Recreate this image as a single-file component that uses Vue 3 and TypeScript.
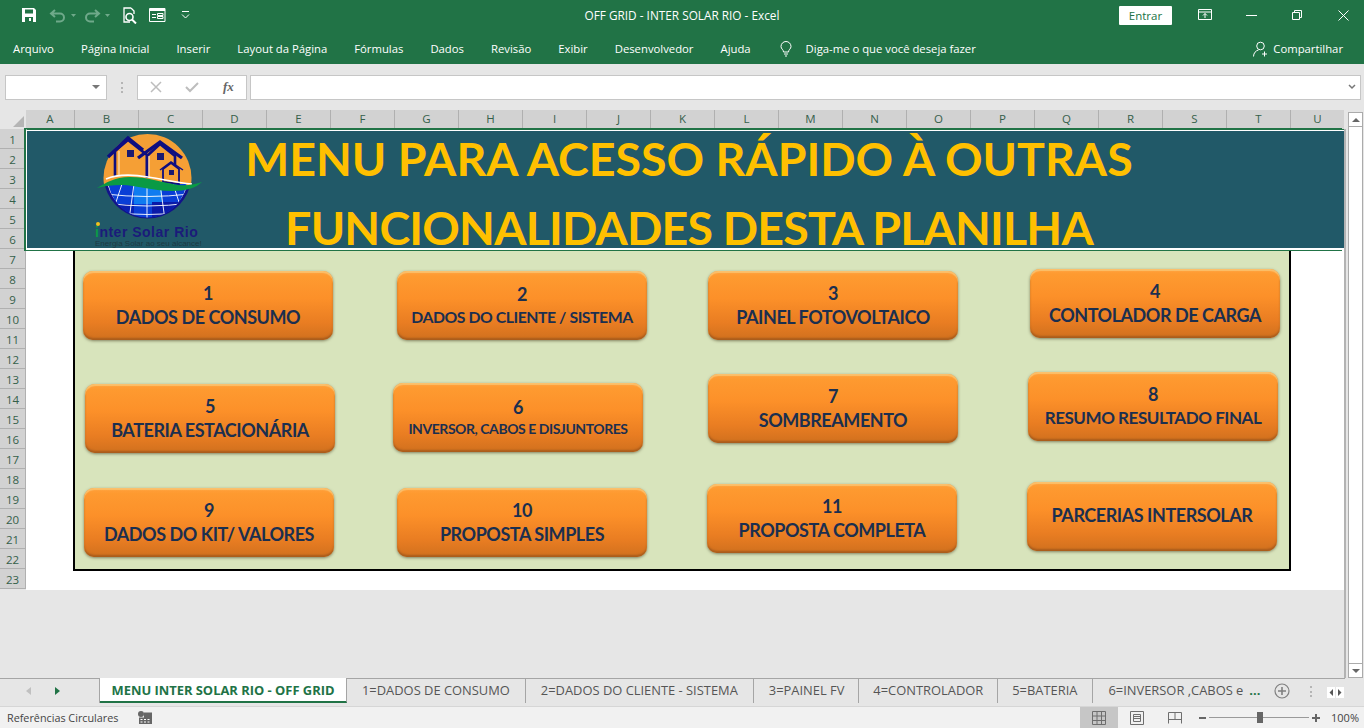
<script setup lang="ts">
const menuTabs = ['Arquivo', 'Página Inicial', 'Inserir', 'Layout da Página', 'Fórmulas', 'Dados', 'Revisão', 'Exibir', 'Desenvolvedor', 'Ajuda']
const columns = 'ABCDEFGHIJKLMNOPQRSTU'.split('')
const rows = Array.from({ length: 23 }, (_, i) => i + 1)
const sheetTabs = ['1=DADOS DE CONSUMO', '2=DADOS DO CLIENTE - SISTEMA', '3=PAINEL FV', '4=CONTROLADOR', '5=BATERIA']

// shapes float over the sheet, so each one keeps its own place (page x/y)
const shapes = [
  { x: 83, y: 271, num: '1', label: 'DADOS DE CONSUMO', size: 18 },
  { x: 397, y: 271, num: '2', label: 'DADOS DO CLIENTE / SISTEMA', size: 15.8 },
  { x: 708, y: 271, num: '3', label: 'PAINEL FOTOVOLTAICO', size: 18 },
  { x: 1030, y: 269, num: '4', label: 'CONTOLADOR DE CARGA', size: 18 },
  { x: 85, y: 384, num: '5', label: 'BATERIA ESTACIONÁRIA', size: 18 },
  { x: 393, y: 383, num: '6', label: 'INVERSOR, CABOS E DISJUNTORES', size: 14 },
  { x: 708, y: 374, num: '7', label: 'SOMBREAMENTO', size: 18 },
  { x: 1028, y: 372, num: '8', label: 'RESUMO RESULTADO FINAL', size: 17 },
  { x: 84, y: 488, num: '9', label: 'DADOS DO KIT/ VALORES', size: 18 },
  { x: 397, y: 488, num: '10', label: 'PROPOSTA SIMPLES', size: 18 },
  { x: 707, y: 484, num: '11', label: 'PROPOSTA COMPLETA', size: 18 },
  { x: 1027, y: 482, num: '', label: 'PARCERIAS INTERSOLAR', size: 18 }
]
</script>

<template>
  <div class="excel">
    <header class="titlebar">
      <div class="quick">
        <svg class="q-save" width="16" height="16" viewBox="0 0 16 16"><path d="M1 1h12l2 2v12H1z" fill="#fff" /><path d="M4 2.500h8v4H4zM4 10h8v5H4z" fill="#217346" /><path d="M8 11h2v3H8z" fill="#fff" /></svg>
        <svg class="q-undo" width="30" height="16" viewBox="0 0 30 16"><path d="M6 3 2 6.500 6 10M2.500 6.500H11a4 4 0 0 1 0 8H7" fill="none" stroke="#6fa98a" stroke-width="2" /><path d="M22 7h5l-2.500 3z" fill="#6fa98a" /></svg>
        <svg class="q-redo" width="30" height="16" viewBox="0 0 30 16"><path d="M10 3l4 3.500L10 10M13.500 6.500H5a4 4 0 0 0 0 8h4" fill="none" stroke="#6fa98a" stroke-width="2" /><path d="M20 7h5l-2.500 3z" fill="#6fa98a" /></svg>
        <svg class="q-print" width="17" height="17" viewBox="0 0 17 17"><path d="M9 1H2v14h6M9 1l3 3v3" fill="none" stroke="#fff" stroke-width="1.300" /><circle cx="7.500" cy="10" r="3.500" fill="none" stroke="#fff" stroke-width="1.600" /><path d="M10 12.500l4 4" stroke="#fff" stroke-width="2" /></svg>
        <svg class="q-form" width="17" height="14" viewBox="0 0 17 14"><path d="M.5.500h15.500v13H.5z" fill="none" stroke="#fff" /><path d="M1 1h15v2H1zM3 6h4v1H3zM3 9h4v1H3z" fill="#fff" /><path d="M8.500 5.500h5.500v2H8.500zM8.500 8.500h5.500v2H8.500z" fill="none" stroke="#fff" /></svg>
        <svg class="q-more" width="9" height="8" viewBox="0 0 9 8"><path d="M1 .5h7M1 3.500l3.500 3.500L8 3.500" fill="none" stroke="#fff" /></svg>
      </div>
      <div class="doc-title">OFF GRID - INTER SOLAR RIO  -  Excel</div>
      <div class="win-controls">
        <button class="signin">Entrar</button>
        <svg class="ribbon-opt" width="14" height="12" viewBox="0 0 14 12"><path d="M.5.500h13v10H.5zM.5 3h13" fill="none" stroke="#fff" /><path d="M7 9V4.500M5 6.500l2-2 2 2" fill="none" stroke="#fff" /></svg>
        <svg class="minimize" width="11" height="1" viewBox="0 0 11 1"><path d="M0 .5h11" stroke="#fff" /></svg>
        <svg class="restore" width="10" height="10" viewBox="0 0 10 10"><path d="M.5 2.500h7v7h-7zM2.500 2.500v-2h7v7h-2" fill="none" stroke="#fff" /></svg>
        <svg class="close" width="11" height="11" viewBox="0 0 11 11"><path d="M.5.500l10 10M10.500.500l-10 10" stroke="#fff" /></svg>
      </div>
    </header>

    <nav class="menubar">
      <span v-for="tab in menuTabs" :key="tab">{{ tab }}</span>
      <svg class="bulb" width="12" height="16" viewBox="0 0 12 16"><path d="M3.500 11C3.500 8.500 1 8 1 5.500a5 5 0 0 1 10 0C11 8 8.500 8.500 8.500 11z" fill="none" stroke="#fff" /><path d="M4 13h4M5 15h2" stroke="#fff" /></svg>
      <span class="tell">Diga-me o que você deseja fazer</span>
      <div class="share">
        <svg width="16" height="16" viewBox="0 0 16 16"><circle cx="7.500" cy="5" r="3.800" fill="none" stroke="#fff" /><path d="M.5 15.500c0-3.500 2.500-6 5-6.500M11.500 10.500v5M9 13h5" fill="none" stroke="#fff" /></svg>
        <span>Compartilhar</span>
      </div>
    </nav>

    <section class="formulabar">
      <div class="namebox"><i class="caret" /></div>
      <div class="grip" />
      <div class="fx-box">
        <svg width="12" height="12" viewBox="0 0 12 12"><path d="M1 1l10 10M11 1 1 11" stroke="#bdbdbd" stroke-width="1.500" /></svg>
        <svg width="14" height="12" viewBox="0 0 14 12"><path d="M1 6l4 4 8-8" fill="none" stroke="#bdbdbd" stroke-width="2" /></svg>
        <span class="fx">fx</span>
      </div>
      <div class="formula-input">
        <svg width="8" height="6" viewBox="0 0 8 6"><path d="M1 1l3 3 3-3" fill="none" stroke="#777" stroke-width="1.500" /></svg>
      </div>
    </section>

    <main class="workbook">
      <div class="sheet-wrap">
        <div class="col-head">
          <div class="corner"><i /></div>
          <div v-for="col in columns" :key="col" class="col-cell" :class="`col-${col}`">{{ col }}</div>
        </div>
        <div class="sheet-body">
          <div class="row-head">
            <div v-for="row in rows" :key="row" class="row-cell">{{ row }}</div>
          </div>
          <div class="canvas">
            <div class="banner">
              <!-- viewBox uses page coordinates, easier to trace the logo -->
              <svg class="logo" width="120" height="119" viewBox="90 130 120 119">
                <defs>
                  <clipPath id="top-half"><rect x="100" y="130" width="100" height="56" /></clipPath>
                  <clipPath id="low-half"><circle cx="147.500" cy="178" r="39.500" /></clipPath>
                </defs>
                <circle cx="147.500" cy="178" r="44" fill="#f59f35" clip-path="url(#top-half)" />
                <path d="M105 186a44 44 0 0 0 85 0z" fill="#12128c" />
                <path d="M108 186a41 41 0 0 0 79 0z" fill="#fff" />
                <g clip-path="url(#low-half)">
                  <rect x="105" y="184" width="85" height="40" fill="#0a3ed6" />
                  <rect x="134" y="186" width="28" height="18" fill="#0f7cf0" />
                  <rect x="106" y="204" width="28" height="20" fill="#0a1fb0" />
                  <rect x="152" y="202" width="34" height="22" fill="#0a1aa8" />
                  <g stroke="#fff" stroke-width="0.900" fill="none">
                    <path d="M105 194q42 5 85 0M105 203q42 6 85 0M110 212q38 5 75 0" />
                    <path d="M122 184l-10 30M134 184l-5 36M147 184v38M160 184l5 36M173 184l10 30" />
                  </g>
                </g>
                <g fill="#f59f35" stroke="#0e0e80" stroke-width="2.600">
                  <path d="M115 176v-25l13-11 19 15v21" />
                  <path d="M147 178v-22l13-12 15 12v23" />
                </g>
                <path d="M108 157l20-19 15 12M138 158l22-16 22 16" fill="none" stroke="#0e0e80" stroke-width="3.400" />
                <path d="M119 175v-24M149 177v-21" stroke="#fff" stroke-width="0.800" />
                <path d="M163 182v-13l8-6 8 6v15z" fill="#f59f35" stroke="#0e0e80" stroke-width="1.800" />
                <path d="M160 170l11-8 12 8" fill="none" stroke="#0e0e80" stroke-width="1.500" />
                <path d="M127 150h7v7h-7zM157 153h7v7h-7zM169 170h5v5h-5z" fill="#1a1a70" />
                <path d="M106 179c14-6 30-4 42-2 14 2 28 6 44 7" fill="none" stroke="#fff" stroke-width="1.600" />
                <path d="M97 188C106 183 114 177 130 177 148 177 160 182 178 185 188 186 196 184 202 182 196 188 186 191 172 191 152 191 136 185 122 185 112 185 104 186 97 188z" fill="#0a9a45" />
                <circle cx="98" cy="224" r="2" fill="#f3c21c" />
                <text x="95" y="237" class="logo-name"><tspan class="logo-i">i</tspan>nter Solar Rio</text>
                <text x="95" y="246" class="logo-sub">Energia Solar ao seu alcance!</text>
              </svg>
              <h1>MENU PARA ACESSO RÁPIDO À OUTRAS</h1>
              <h1 class="second">FUNCIONALIDADES DESTA PLANILHA</h1>
            </div>
            <div class="panel" />
            <button
              v-for="shape in shapes"
              :key="shape.label"
              class="shape"
              :style="{ left: `${shape.x - 26}px`, top: `${shape.y - 129}px` }"
            >
              <span v-if="shape.num" class="shape-num">{{ shape.num }}</span>
              <span class="shape-label" :style="{ fontSize: `${shape.size}px` }">{{ shape.label }}</span>
            </button>
          </div>
        </div>
      </div>
      <aside class="vscroll">
        <div class="vbtn"><i class="up" /></div>
        <div class="vtrack" />
        <div class="vbtn"><i class="down" /></div>
      </aside>
    </main>

    <div class="tabstrip">
      <div class="tab-nav">
        <i class="arrow-left" />
        <i class="arrow-right" />
      </div>
      <div class="tab active">MENU INTER SOLAR RIO - OFF GRID</div>
      <div v-for="name in sheetTabs" :key="name" class="tab">{{ name }}</div>
      <div class="tab last">6=INVERSOR ,CABOS e</div>
      <span class="ellipsis">...</span>
      <svg class="add" width="16" height="16" viewBox="0 0 16 16"><circle cx="8" cy="8" r="7" fill="none" stroke="#808080" stroke-width="1.200" /><path d="M8 4v8M4 8h8" stroke="#808080" stroke-width="1.600" /></svg>
      <div class="grip small" />
      <svg class="split" width="17" height="11" viewBox="0 0 17 11"><path d="M0 0h8v11H0zM9 0h8v11H9z" fill="#fff" /><path d="M6 2 2.500 5.500 6 9zM11 2l3.500 3.500L11 9z" fill="#555" /></svg>
    </div>

    <footer class="statusbar">
      <span>Referências Circulares</span>
      <svg class="macro" width="14" height="13" viewBox="0 0 14 13"><circle cx="3" cy="3" r="3" fill="#666" /><path d="M6 1.500h8V13H1V6.500h5z" fill="#666" /><path d="M2.500 8h2v1h-2zM6 8h2v1H6zM9.500 8h2v1h-2zM2.500 10.500h2v1h-2zM6 10.500h2v1H6zM9.500 10.500h2v1h-2z" fill="#fff" /></svg>
      <div class="status-right">
        <div class="view active">
          <svg width="14" height="14" viewBox="0 0 14 14"><path d="M.5.500h13v13H.5zM.5 5h13M.5 9.500h13M5 .5v13M9.500.5v13" fill="none" stroke="#6e6e6e" /></svg>
        </div>
        <div class="view">
          <svg width="14" height="14" viewBox="0 0 14 14"><path d="M.5.500h13v13H.5zM3.500 3.500h7v7h-7zM3.500 5.500h7M3.500 7.500h7" fill="none" stroke="#6e6e6e" /></svg>
        </div>
        <div class="view">
          <svg width="14" height="12" viewBox="0 0 14 12"><path d="M.5 11.500V.5h13v11M.5 7.500h13M7 .5v7" fill="none" stroke="#6e6e6e" /></svg>
        </div>
        <div class="zoom-slider">
          <i class="minus" />
          <div class="track"><i class="thumb" /></div>
          <i class="plus" />
        </div>
        <span class="pct">100%</span>
      </div>
    </footer>
  </div>
</template>

<style scoped>
.excel {
  width: 1364px;
  height: 728px;
  display: flex;
  flex-direction: column;
  overflow: hidden;
  background: #e6e6e6;
  font-family: "Open Sans", "Noto Sans", sans-serif;
  color: #444;
}

.titlebar {
  height: 35px;
  flex: none;
  box-sizing: border-box;
  padding-bottom: 5px;
  background: #217346;
  color: #fff;
  display: grid;
  grid-template-columns: 1fr auto 1fr;
  align-items: center;
}

.quick {
  display: flex;
  align-items: center;
  padding-left: 21px;
}

.q-undo {
  margin-left: 12px;
}

.q-redo {
  margin-left: 6px;
}

.q-print {
  margin-left: 7px;
}

.q-form {
  margin-left: 10px;
}

.q-more {
  margin-left: 15px;
}

.doc-title {
  font-size: 11.800px;
  white-space: pre;
}

.win-controls {
  display: flex;
  align-items: center;
  justify-content: flex-end;
  padding-right: 15px;
}

.signin {
  width: 53px;
  height: 19px;
  padding: 0;
  background: #fff;
  color: #217346;
  border: none;
  border-radius: 1px;
  font: 11.500px "Open Sans", sans-serif;
}

.ribbon-opt {
  margin-left: 26px;
}

.minimize {
  margin-left: 34px;
}

.restore {
  margin-left: 35px;
}

.close {
  margin-left: 36px;
}

.menubar {
  height: 29px;
  flex: none;
  box-sizing: border-box;
  padding: 0 21px 2px 13px;
  background: #217346;
  color: #fff;
  display: flex;
  align-items: center;
  gap: 27px;
  font-size: 11.300px;
}

.bulb {
  margin-left: 2px;
}

.tell {
  margin-left: -13px;
}

.share {
  margin-left: auto;
  display: flex;
  align-items: center;
  gap: 4px;
}

.formulabar {
  height: 46px;
  flex: none;
  display: flex;
  align-items: center;
}

.namebox,
.fx-box,
.formula-input {
  height: 25px;
  background: #fff;
  border: 1px solid #c6c6c6;
  box-sizing: border-box;
}

.namebox {
  width: 102px;
  margin-left: 5px;
  position: relative;
}

.caret {
  position: absolute;
  right: 6px;
  top: 9px;
  border: 4px solid transparent;
  border-top: 4px solid #777;
}

.grip {
  width: 2px;
  height: 11px;
  margin: 0 14px;
  border-left: 2px dotted #b5b5b5;
  box-sizing: border-box;
}

.fx-box {
  width: 110px;
  display: flex;
  align-items: center;
  gap: 23px;
  padding-left: 12px;
}

.fx {
  font: italic 700 13px "Liberation Serif", serif;
  color: #666;
  margin-left: 1px;
}

.formula-input {
  flex: 1;
  margin: 0 3px;
  display: flex;
  align-items: center;
  justify-content: flex-end;
  padding-right: 4px;
}

.workbook {
  height: 568px;
  flex: none;
  display: flex;
}

.sheet-wrap {
  width: 1345px;
  flex: none;
  position: relative;
}

/* thin edge between the sheet and the scrollbar */
.sheet-wrap::after {
  content: '';
  position: absolute;
  right: -1px;
  top: 19px;
  bottom: 0;
  width: 2px;
  background: #b3b3b3;
}

.col-head {
  height: 19px;
  display: flex;
}

.corner {
  width: 26px;
  flex: none;
  position: relative;
}

.corner i {
  position: absolute;
  right: 2px;
  bottom: 2px;
  border-left: 11px solid transparent;
  border-bottom: 11px solid #b5b5b5;
}

.col-cell {
  width: 64px;
  flex: none;
  box-sizing: border-box;
  background: #d2d2d2;
  border-right: 1px solid #b0b0b0;
  text-align: center;
  font-size: 11.500px;
  line-height: 18px;
  color: #35604a;
}

.col-A {
  width: 49px;
}

.col-U {
  width: 53px;
  border-right: none;
}

.sheet-body {
  display: flex;
  height: 461px;
}

.row-head {
  width: 26px;
  flex: none;
}

.row-cell {
  height: 20px;
  box-sizing: border-box;
  background: #d2d2d2;
  border-bottom: 1px solid #b0b0b0;
  border-right: 1px solid #b0b0b0;
  text-align: center;
  font-size: 11.500px;
  line-height: 22px;
  color: #35604a;
}

.canvas {
  width: 1318px;
  flex: none;
  position: relative;
  background: #fff;
}

.banner {
  height: 121px;
  box-sizing: border-box;
  background: #215968;
  border-top: 1px solid #217346;
  border-bottom: 2px solid #fff;
  border-left: 1px solid #fff;
  padding-left: 7px;
  box-shadow:
    inset 0 1px 0 #fff,
    -2px -1px 0 #217346,
    -2px 1px 0 #217346;
  color: #ffc000;
  position: relative;
}

.banner h1 {
  margin: 0;
  text-align: center;
  font: 700 46.500px/56px Lato, "Open Sans", sans-serif;
  white-space: nowrap;
}

.banner h1.second {
  margin-top: 13px;
  letter-spacing: -0.800px;
}

.logo {
  position: absolute;
  left: 63px;
  top: 0;
}

.logo-name {
  font: 700 14px "Liberation Sans", sans-serif;
  letter-spacing: 0.500px;
  fill: #1b1b7a;
}

.logo-i {
  fill: #0a9a45;
}

.logo-sub {
  font: 8px "Liberation Sans", sans-serif;
  fill: #1e3a44;
}

.panel {
  margin-left: 47px;
  width: 1218px;
  height: 321px;
  box-sizing: border-box;
  background: #d8e4bc;
  border: 2px solid #000;
  border-top: none;
}

.shape {
  position: absolute;
  width: 250px;
  height: 69px;
  padding: 0 0 1px;
  display: flex;
  flex-direction: column;
  align-items: center;
  justify-content: center;
  border: none;
  border-radius: 10px;
  background: linear-gradient(#ffa03c 0, #fe9a30 8%, #fc9029 40%, #e97d22 75%, #d0701e 100%);
  box-shadow:
    inset 0 2px 1px #fbc06c,
    inset 0 -2px 2px #a95c1c,
    0 1px 3px rgba(60, 50, 20, 0.55);
  color: #1b2f4f;
  font-family: Lato, "Open Sans", sans-serif;
  font-weight: 700;
  letter-spacing: -0.450px;
  white-space: nowrap;
}

.shape-num {
  font-size: 18px;
  line-height: 25px;
}

.shape-label {
  line-height: 1.300;
}

.vscroll {
  width: 19px;
  flex: none;
  display: flex;
  flex-direction: column;
  padding: 2px 1px 0 3px;
  box-sizing: border-box;
}

.vbtn {
  height: 15px;
  flex: none;
  background: #fff;
  border: 1px solid #ababab;
  box-sizing: border-box;
  display: flex;
  align-items: center;
  justify-content: center;
}

.vtrack {
  flex: 1;
  background: #fff;
  border-left: 1px solid #ababab;
  border-right: 1px solid #ababab;
}

.up {
  border: 4px solid transparent;
  border-bottom: 4px solid #666;
  margin-top: -4px;
}

.down {
  border: 4px solid transparent;
  border-top: 4px solid #666;
  margin-top: 4px;
}

.tabstrip {
  height: 28px;
  flex: none;
  display: flex;
  align-items: flex-start;
  background: linear-gradient(#a5a5a5, #a5a5a5) 0 0 / 1345px 1px no-repeat;
  box-sizing: border-box;
  font-size: 12.900px;
}

.tab-nav {
  width: 100px;
  flex: none;
  height: 25px;
  display: flex;
  align-items: center;
  gap: 24px;
  padding-left: 26px;
  box-sizing: border-box;
  border-right: 1px solid #a5a5a5;
}

.arrow-left {
  border: 4px solid transparent;
  border-right: 5px solid #c0c0c0;
  border-left: none;
}

.arrow-right {
  border: 4px solid transparent;
  border-left: 5px solid #217346;
  border-right: none;
}

.tab {
  height: 25px;
  line-height: 25px;
  padding: 0 15px;
  color: #555;
  border-right: 1px solid #a5a5a5;
  box-sizing: border-box;
  white-space: nowrap;
}

.tab:nth-child(5) {
  padding-right: 14px;
}

.tab:nth-child(6) {
  padding: 0 14px;
}

.tab:nth-child(7) {
  padding-left: 14px;
}

.tab.active {
  width: 247px;
  padding: 0;
  text-align: center;
  background: #fff;
  color: #217346;
  font-weight: 700;
  border-bottom: 2px solid #217346;
}

.tab.last {
  border-right: none;
  padding-right: 6px;
}

.ellipsis {
  color: #217346;
  font-weight: 700;
  line-height: 25px;
  margin-right: 14px;
}

.add {
  flex: none;
  margin-top: 5px;
}

.grip.small {
  margin: 8px 0 0 20px;
}

.split {
  flex: none;
  margin: 9px 0 0 15px;
}

.statusbar {
  flex: 1;
  display: flex;
  align-items: center;
  background: #f1f1f1;
  border-top: 1px solid #d6d6d6;
  padding-left: 7px;
  font-size: 10.800px;
  color: #444;
}

.macro {
  margin-left: 20px;
}

.status-right {
  margin-left: auto;
  display: flex;
  align-items: center;
  height: 100%;
  padding-right: 5px;
}

.view {
  width: 38px;
  height: 100%;
  display: flex;
  align-items: center;
  justify-content: center;
}

.view.active {
  background: #c6c6c6;
}

.zoom-slider {
  display: flex;
  align-items: center;
  gap: 3px;
}

.minus {
  width: 7px;
  height: 2px;
  margin-left: 5px;
  background: #666;
}

.plus {
  width: 8px;
  height: 8px;
  background: linear-gradient(#666, #666) center / 8px 2px no-repeat, linear-gradient(#666, #666) center / 2px 8px no-repeat;
}

.track {
  width: 100px;
  height: 1px;
  background: #9a9a9a;
  position: relative;
}

.thumb {
  position: absolute;
  left: 48px;
  top: -5px;
  width: 6px;
  height: 11px;
  background: #666;
}

.pct {
  margin-left: 11px;
  font-size: 11px;
}
</style>

<style>
html,
body {
  margin: 0;
  padding: 0;
  background: #e6e6e6;
}
</style>
